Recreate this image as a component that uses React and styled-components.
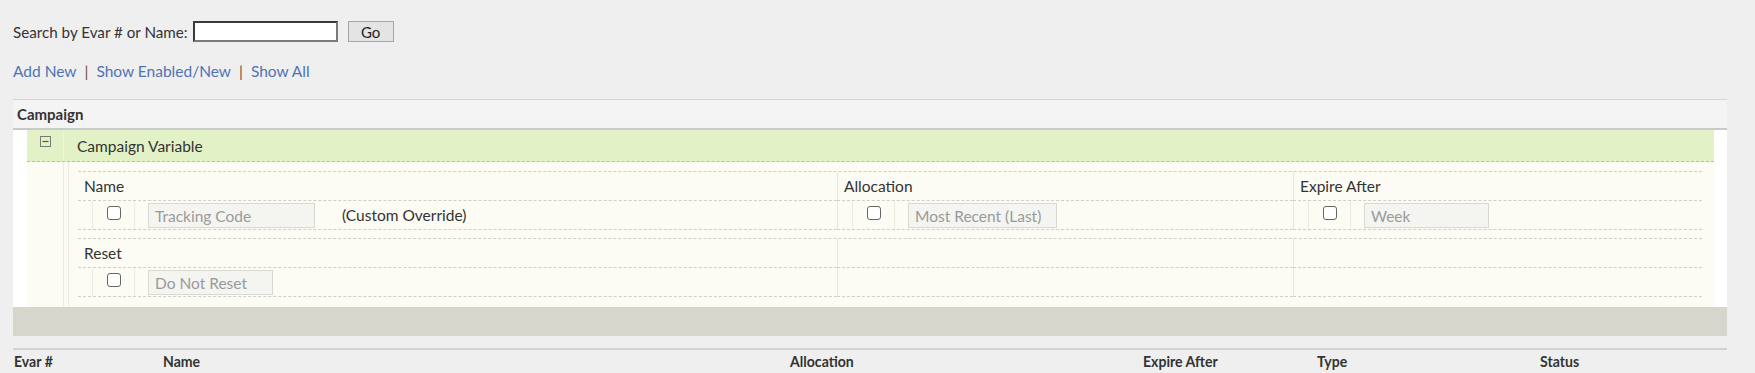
import React from 'react';
import styled, { createGlobalStyle } from 'styled-components';

const FONT = `Lato, "Open Sans", "Liberation Sans", sans-serif`;

const GlobalStyle = createGlobalStyle`
  body {
    margin: 0;
    background: #efefef;
    font-family: ${FONT};
    color: #333;
  }
`;

const Page = styled.div`
  padding: 21px 28px 0 13px;
`;

const SearchRow = styled.form`
  display: flex;
  align-items: center;
  height: 21px;
  font-size: 15.2px;
  color: #333;
`;

const SearchInput = styled.input`
  box-sizing: border-box;
  width: 145px;
  height: 21px;
  margin-left: 5px;
  border: 2px solid #3a3a3a;
  border-right-color: #7a7a7a;
  border-bottom-color: #7a7a7a;
  background: #fff;
  outline: none;
`;

const GoButton = styled.button`
  box-sizing: border-box;
  width: 46px;
  height: 21px;
  margin-left: 10px;
  padding: 0;
  border: 1px solid #a6a6a6;
  background: #e4e4e4;
  font-family: ${FONT};
  font-size: 15px;
  color: #222;
`;

const Links = styled.div`
  display: flex;
  align-items: center;
  gap: 8px;
  height: 18px;
  margin-top: 20px;
  font-size: 15.5px;
`;

const Link = styled.a`
  color: #4f74b5;
  text-decoration: none;
`;

const Pipe = styled.span`
  color: #6e4a3f;
`;

const Section = styled.div`
  margin-top: 19px;
`;

const SectionHeader = styled.div`
  display: flex;
  align-items: center;
  height: 28px;
  padding-left: 4px;
  background: #f4f4f4;
  border-top: 1px solid #d4d4d4;
  border-bottom: 2px solid #c9c9c9;
  font-size: 15px;
  font-weight: 700;
  color: #333;
`;

const SectionBody = styled.div`
  background: #fff;
  padding: 0 13px 0 14px;
`;

const GreenRow = styled.div`
  display: flex;
  height: 31px;
  background: #e3f2c6;
  border-bottom: 1px dashed #b9bdb0;
`;

const IconCell = styled.div`
  display: flex;
  justify-content: center;
  width: 36px;
  padding-top: 6px;
  border-right: 1px solid #edf6dc;
`;

const GreenTitle = styled.div`
  display: flex;
  align-items: center;
  padding-left: 13px;
  font-size: 15.5px;
  color: #333;
`;

const Detail = styled.div`
  display: flex;
  background: #fcfcf5;
`;

const Gutter = styled.div`
  width: ${p => p.w}px;
  border-right: 1px solid #ebebe2;
  flex-shrink: 0;
`;

const InnerTable = styled.div`
  flex: 1;
  padding: 9px 12px 10px 9px;
`;

const Grid = styled.div`
  display: grid;
  grid-template-columns: 759px 456px 1fr;
  border-top: 1px dashed #cfcfc8;
  & + & {
    margin-top: 8px;
  }
`;

const Cell = styled.div`
  display: flex;
  align-items: center;
  height: 28px;
  border-bottom: 1px dashed #cfcfc8;
  border-left: ${p => (p.first ? 'none' : '1px solid #e6e6de')};
  padding-left: ${p => (p.label ? '6px' : '0')};
  font-size: 15.5px;
  color: #333;
`;

const CheckCell = styled.div`
  display: flex;
  justify-content: center;
  align-items: flex-start;
  padding-top: 5px;
  box-sizing: border-box;
  height: 100%;
  width: 43px;
  margin-left: 14px;
  border-left: 1px solid #ebebe2;
  border-right: 1px solid #ebebe2;
`;

const Check = styled.span`
  display: block;
  box-sizing: border-box;
  width: 14px;
  height: 14px;
  border: 1px solid #666;
  border-radius: 3px;
  background: #fff;
`;

const Field = styled.div`
  box-sizing: border-box;
  width: ${p => p.w}px;
  height: 25px;
  margin-left: 13px;
  margin-top: 1px;
  padding-left: 6px;
  display: flex;
  align-items: center;
  border: 1px solid #d9d9d4;
  background: #f4f4f1;
  color: #9a9a9a;
  font-size: 15.5px;
`;

const Note = styled.span`
  margin-left: 27px;
`;

const Band = styled.div`
  height: 29px;
  background: #d6d6cc;
`;

const ColumnHeader = styled.div`
  display: grid;
  grid-template-columns: 149px 627px 353px 174px 223px 1fr;
  align-items: center;
  height: 22px;
  margin-top: 12px;
  padding-left: 1px;
  border-top: 2px solid #d3d3d3;
  font-weight: 700;
  font-size: 16px;
  line-height: 1;
  color: #333;
`;

const HeadLabel = styled.span`
  display: inline-block;
  transform: scaleX(0.88);
  transform-origin: left center;
  white-space: nowrap;
`;

const MinusIcon = () => (
  <svg width="11" height="11" viewBox="0 0 11 11">
    <rect x="0.5" y="0.5" width="10" height="10" fill="none" stroke="#7a7a7a" />
    <line x1="2.5" y1="5.5" x2="8.5" y2="5.5" stroke="#555" strokeWidth="1.2" />
  </svg>
);

const FieldRow = ({ first, width, value, children }) => (
  <Cell first={first}>
    <CheckCell>
      <Check />
    </CheckCell>
    <Field w={width}>{value}</Field>
    {children}
  </Cell>
);

const columns = ['Evar #', 'Name', 'Allocation', 'Expire After', 'Type', 'Status'];

export default function App() {
  return (
    <>
      <GlobalStyle />
      <Page>
        <SearchRow onSubmit={e => e.preventDefault()}>
          Search by Evar # or Name:
          <SearchInput />
          <GoButton type="submit">Go</GoButton>
        </SearchRow>

        <Links>
          <Link href="#">Add New</Link>
          <Pipe>|</Pipe>
          <Link href="#">Show Enabled/New</Link>
          <Pipe>|</Pipe>
          <Link href="#">Show All</Link>
        </Links>

        <Section>
          <SectionHeader>Campaign</SectionHeader>
          <SectionBody>
            <GreenRow>
              <IconCell>
                <MinusIcon />
              </IconCell>
              <GreenTitle>Campaign Variable</GreenTitle>
            </GreenRow>
            <Detail>
              <Gutter w={36} />
              <Gutter w={4} />
              <InnerTable>
                <Grid>
                  <Cell first label>Name</Cell>
                  <Cell label>Allocation</Cell>
                  <Cell label>Expire After</Cell>
                  <FieldRow first width={167} value="Tracking Code">
                    <Note>(Custom Override)</Note>
                  </FieldRow>
                  <FieldRow width={149} value="Most Recent (Last)" />
                  <FieldRow width={125} value="Week" />
                </Grid>
                <Grid>
                  <Cell first label>Reset</Cell>
                  <Cell />
                  <Cell />
                  <FieldRow first width={125} value="Do Not Reset" />
                  <Cell />
                  <Cell />
                </Grid>
              </InnerTable>
            </Detail>
          </SectionBody>
          <Band />
        </Section>

        <ColumnHeader>
          {columns.map(c => (
            <HeadLabel key={c}>{c}</HeadLabel>
          ))}
        </ColumnHeader>
      </Page>
    </>
  );
}
